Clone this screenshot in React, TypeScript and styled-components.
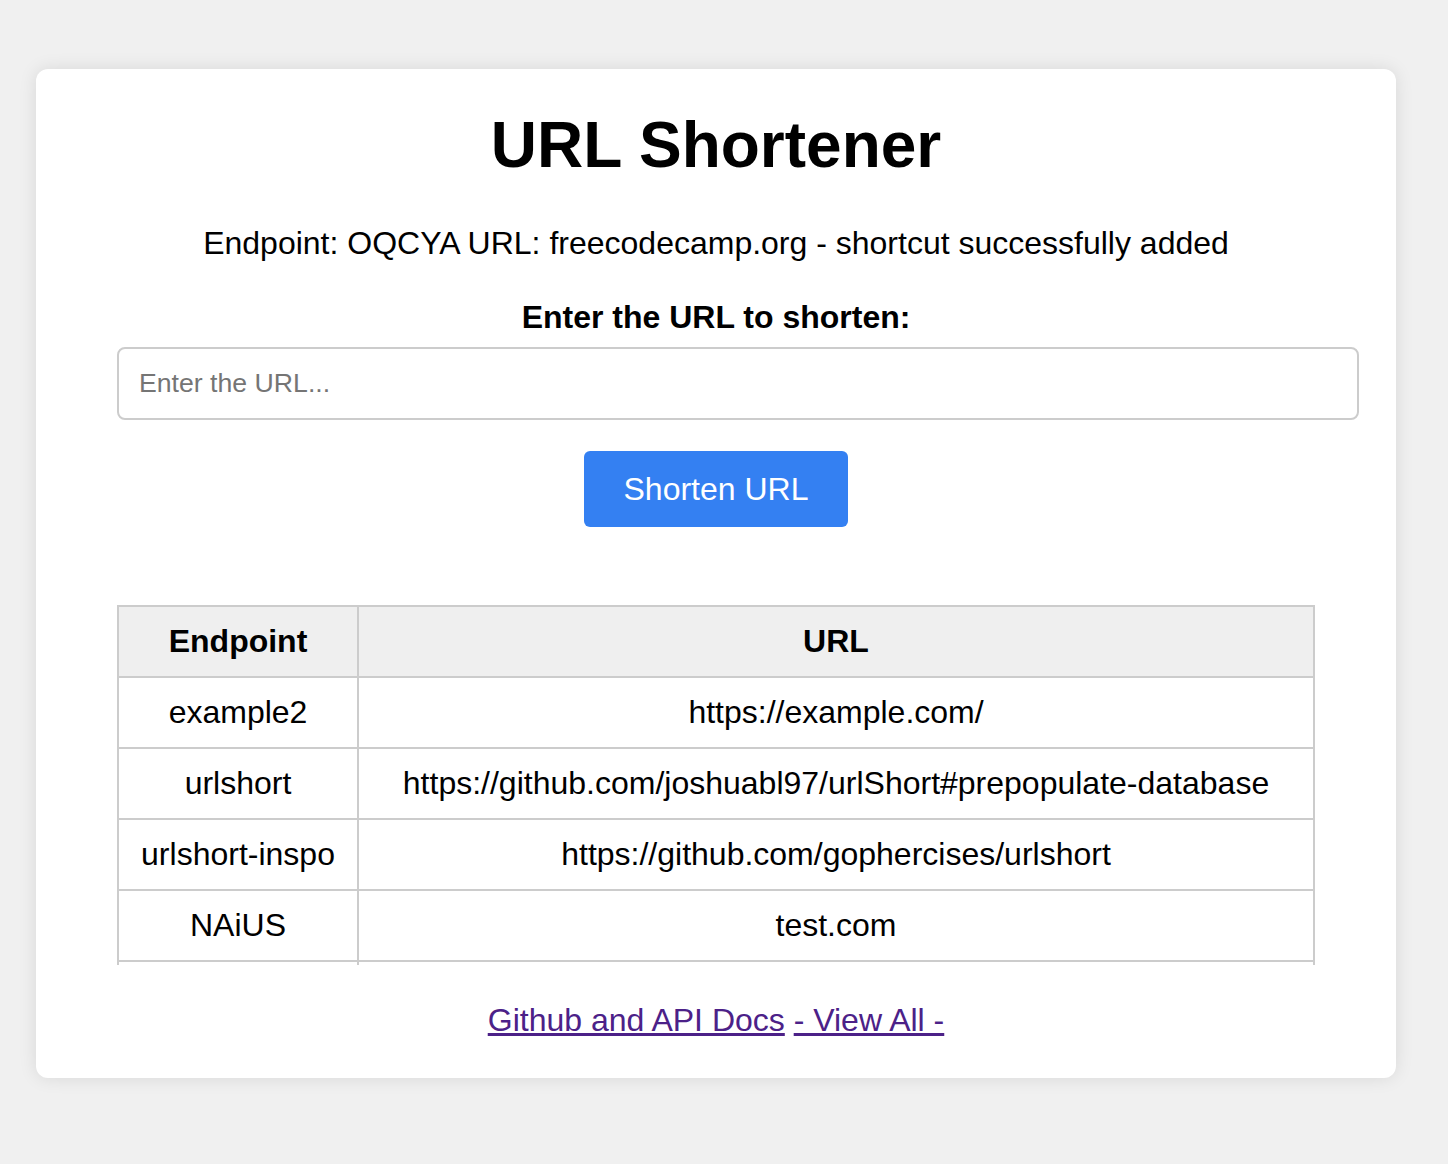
import React from "react";
import styled, { createGlobalStyle } from "styled-components";

const Global = createGlobalStyle`
  html, body { margin: 0; padding: 0; background: #f0f0f0; }
  body { font-family: "Liberation Sans", Arial, sans-serif; color: #000; }
`;

const Page = styled.div`
  padding: 69px 52px 86px 36px;
`;

const Card = styled.div`
  background: #fff;
  border-radius: 12px;
  box-shadow: 0 0 18px rgba(0, 0, 0, 0.1);
  padding: 36px 81px 39px 81px;
  display: flex;
  flex-direction: column;
  align-items: stretch;
`;

const Title = styled.h1`
  margin: 0;
  text-align: center;
  font-size: 64px;
  font-weight: bold;
  line-height: 80px;
`;

const Message = styled.p`
  margin: 40px 0 0;
  text-align: center;
  font-size: 32px;
  line-height: 37px;
`;

const Label = styled.label`
  display: block;
  margin-top: 37px;
  text-align: center;
  font-size: 32px;
  font-weight: bold;
  line-height: 37px;
`;

const Input = styled.input`
  box-sizing: content-box;
  width: 100%;
  margin-top: 11px;
  height: 69px;
  padding: 0 20px;
  border: 2px solid #cccccc;
  border-radius: 8px;
  font-family: "Liberation Sans", Arial, sans-serif;
  font-size: 26.67px;
  outline: none;
  &::placeholder { color: #757575; }
`;

const ButtonRow = styled.div`
  display: flex;
  justify-content: center;
  margin-top: 31px;
`;

const Button = styled.button`
  width: 264px;
  height: 76px;
  background: #3480f2;
  color: #fff;
  border: none;
  border-radius: 6px;
  font-family: "Liberation Sans", Arial, sans-serif;
  font-size: 32px;
  cursor: pointer;
`;

const TableWrap = styled.div`
  margin-top: 78px;
  height: 360px;
  overflow: hidden;
`;

const Table = styled.table`
  width: 100%;
  border-collapse: collapse;
  font-size: 32px;
`;

const Th = styled.th<{ $w?: number }>`
  background: #efefef;
  border: 2px solid #cccccc;
  height: 69px;
  padding: 0 20px;
  font-weight: bold;
  text-align: center;
  ${(p) => (p.$w ? `width: ${p.$w}px;` : "")}
`;

const Td = styled.td`
  border: 2px solid #cccccc;
  height: 69px;
  padding: 0 20px;
  text-align: center;
`;

const Footer = styled.div`
  margin-top: 37px;
  text-align: center;
  font-size: 32px;
  line-height: 37px;
`;

const Link = styled.a`
  color: #4c2188;
  text-decoration: underline;
`;

const rows = [
  ["example2", "https://example.com/"],
  ["urlshort", "https://github.com/joshuabl97/urlShort#prepopulate-database"],
  ["urlshort-inspo", "https://github.com/gophercises/urlshort"],
  ["NAiUS", "test.com"],
  ["OQCYA", "freecodecamp.org"],
];

export default function App() {
  return (
    <>
      <Global />
      <Page>
        <Card>
          <Title>URL Shortener</Title>
          <Message>
            Endpoint: OQCYA URL: freecodecamp.org - shortcut successfully added
          </Message>
          <Label htmlFor="url">Enter the URL to shorten:</Label>
          <Input id="url" placeholder="Enter the URL..." />
          <ButtonRow>
            <Button>Shorten URL</Button>
          </ButtonRow>
          <TableWrap>
            <Table>
              <thead>
                <tr>
                  <Th $w={198}>Endpoint</Th>
                  <Th>URL</Th>
                </tr>
              </thead>
              <tbody>
                {rows.map(([e, u]) => (
                  <tr key={e}>
                    <Td>{e}</Td>
                    <Td>{u}</Td>
                  </tr>
                ))}
              </tbody>
            </Table>
          </TableWrap>
          <Footer>
            <Link href="#">Github and API Docs</Link>{" "}
            <Link href="#">- View All -</Link>
          </Footer>
        </Card>
      </Page>
    </>
  );
}
